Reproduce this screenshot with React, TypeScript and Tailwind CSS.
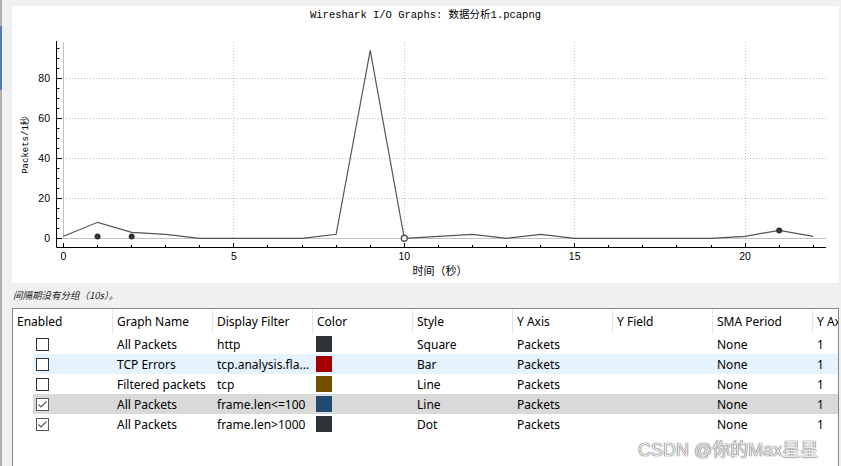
const X0 = 63.5;
const XS = 34.08;
const Y0 = 238.3;
const YS = 2;
const px = (v: number) => X0 + XS * v;
const py = (v: number) => Y0 - YS * v;
const crisp = (n: number) => Math.floor(n) + 0.5;

const series = [1, 8, 3, 2, 0, 0, 0, 0, 2, 94, 0, 1, 2, 0, 2, 0, 0, 0, 0, 0, 1, 4, 1];

const mono = "'Liberation Mono', 'Noto Sans CJK SC', monospace";
const tickFont = "'Liberation Sans', Arial, sans-serif";

const columns = ["Enabled", "Graph Name", "Display Filter", "Color", "Style", "Y Axis", "Y Field", "SMA Period", "Y Axis Factor"];

const graphs = [
  { on: false, name: "All Packets", filter: "http", color: "bg-[#2e3236]", style: "Square", bg: "bg-white" },
  { on: false, name: "TCP Errors", filter: "tcp.analysis.fla...", color: "bg-[#a40000]", style: "Bar", bg: "bg-[#e5f3ff]" },
  { on: false, name: "Filtered packets", filter: "tcp", color: "bg-[#725000]", style: "Line", bg: "bg-white" },
  { on: true, name: "All Packets", filter: "frame.len<=100", color: "bg-[#204a6e]", style: "Line", bg: "bg-[#d9d9d9]" },
  { on: true, name: "All Packets", filter: "frame.len>1000", color: "bg-[#2e3436]", style: "Dot", bg: "bg-white" },
];

function Chart() {
  const linePts = series.map((v, i) => `${px(i)},${py(v)}`).join(" ");
  const minorY = Array.from({ length: 20 }, (_, i) => i * 5);
  const minorX = Array.from({ length: 23 }, (_, i) => i);
  return (
    <svg className="block shrink-0" width={827} height={258} viewBox="12 25 827 258">
      {/* grid */}
      {[20, 40, 60, 80].map((v) => (
        <line key={v} x1={63} x2={826} y1={crisp(py(v))} y2={crisp(py(v))} stroke="#c4c4c4" strokeDasharray="1 2" />
      ))}
      {[5, 10, 15, 20].map((v) => (
        <line key={v} x1={crisp(px(v))} x2={crisp(px(v))} y1={42} y2={247} stroke="#c4c4c4" strokeDasharray="1 2" />
      ))}
      {/* zero lines */}
      <line x1={63} x2={826} y1={238.5} y2={238.5} stroke="#c0c0c0" />
      <line x1={63.5} x2={63.5} y1={42} y2={238} stroke="#c0c0c0" />

      {/* axes */}
      <line x1={56.5} x2={56.5} y1={41} y2={247.5} stroke="#000" />
      <line x1={56.5} x2={826} y1={247.5} y2={247.5} stroke="#000" />
      {minorY.map((v) => (
        <line key={v} x1={56.5} x2={v % 20 === 0 ? 62 : 59.5} y1={crisp(py(v))} y2={crisp(py(v))} stroke="#000" />
      ))}
      {minorX.map((v) => (
        <line key={v} x1={crisp(px(v))} x2={crisp(px(v))} y1={247} y2={v % 5 === 0 ? 243 : 245} stroke="#000" />
      ))}

      {/* tick labels */}
      {[0, 20, 40, 60, 80].map((v) => (
        <text key={v} x={50} y={py(v) + 3.8} textAnchor="end" fontSize={10.5} fontFamily={tickFont} fill="#000">
          {v}
        </text>
      ))}
      {[0, 5, 10, 15, 20].map((v) => (
        <text key={v} x={px(v)} y={260} textAnchor="middle" fontSize={10.5} fontFamily={tickFont} fill="#000">
          {v}
        </text>
      ))}

      {/* axis titles */}
      <text x={440} y={275} textAnchor="middle" fontSize={11} fontFamily="'Noto Sans CJK SC', sans-serif" fill="#000">
        时间（秒）
      </text>
      <text
        x={0}
        y={0}
        transform="translate(27.5 145) rotate(-90)"
        textAnchor="middle"
        fontSize={9}
        fontFamily={mono}
        fill="#000"
      >
        Packets/1秒
      </text>

      {/* data */}
      <polyline points={linePts} fill="none" stroke="#555" strokeWidth={1.2} />
      <circle cx={px(1)} cy={236.4} r={3} fill="#333" />
      <circle cx={px(2)} cy={236.4} r={3} fill="#333" />
      <circle cx={px(21)} cy={230.4} r={3} fill="#333" />
      <circle cx={px(10)} cy={238.3} r={3} fill="#fff" stroke="#555" strokeWidth={1.4} />
    </svg>
  );
}

function Checkbox({ on }: { on: boolean }) {
  return (
    <div className={`flex h-[13px] w-[13px] items-center justify-center border bg-white ${on ? "border-[#555]" : "border-[#333]"}`}>
      {on && (
        <svg width="11" height="11" viewBox="0 0 11 11" fill="none" stroke="#555" strokeWidth="1.2">
          <polyline points="1.5,5.5 4,8 9.5,2.5" />
        </svg>
      )}
    </div>
  );
}

export default function App() {
  return (
    <div className="relative flex h-[466px] w-[841px] overflow-hidden bg-[#f0f0f0] text-black">
      {/* window edge */}
      <div className="flex w-[2px] shrink-0 flex-col bg-[#b0b0b0]">
        <div className="h-[26px] shrink-0" />
        <div className="h-[64px] shrink-0 bg-[#4d7fc0]" />
      </div>

      <div className="ml-[10px] flex w-[827px] shrink-0 flex-col pt-[6px]">
        {/* Plot */}
        <div className="flex h-[277px] shrink-0 flex-col bg-white">
          <div className="h-[19px] shrink-0 text-center text-[10.5px] leading-[19px] font-['Liberation_Mono','Noto_Sans_CJK_SC',monospace]">
            Wireshark I/O Graphs: 数据分析1.pcapng
          </div>
          <Chart />
        </div>

        {/* Status */}
        <div className="flex h-[25px] shrink-0 items-center pl-[1px] text-[9.5px] italic text-[#202020] font-['Noto_Sans_CJK_SC',sans-serif]">
          间隔期没有分组（10s）。
        </div>

        {/* Graph table */}
        <div className="h-[200px] shrink-0 overflow-hidden border border-[#828790] bg-white text-[12px] font-['Noto_Sans',sans-serif]">
          <div className="flex h-[25px]">
            {columns.map((c) => (
              <div key={c} className="flex w-[100px] shrink-0 items-center overflow-hidden whitespace-nowrap border-r border-[#e5e5e5] pl-[4px]">
                {c}
              </div>
            ))}
          </div>
          {graphs.map((g, i) => (
            <div key={i} className="flex h-[20px]">
              <div className="w-[20px] shrink-0" />
              <div className={`flex flex-1 ${g.bg}`}>
                <div className="flex w-[80px] shrink-0 items-center pl-[3px]">
                  <Checkbox on={g.on} />
                </div>
                <div className="flex w-[100px] shrink-0 items-center whitespace-nowrap pl-[4px] pt-[2px]">{g.name}</div>
                <div className="flex w-[100px] shrink-0 items-center whitespace-nowrap pl-[4px] pt-[2px]">{g.filter}</div>
                <div className="flex w-[100px] shrink-0 items-center pl-[3px]">
                  <div className={`h-[16px] w-[16px] ${g.color}`} />
                </div>
                <div className="flex w-[100px] shrink-0 items-center pl-[4px] pt-[2px]">{g.style}</div>
                <div className="flex w-[100px] shrink-0 items-center pl-[4px] pt-[2px]">Packets</div>
                <div className="w-[100px] shrink-0" />
                <div className="flex w-[100px] shrink-0 items-center pl-[4px] pt-[2px]">None</div>
                <div className="flex w-[100px] shrink-0 items-center pl-[4px] pt-[2px]">1</div>
              </div>
            </div>
          ))}
        </div>
      </div>

      <div className="absolute left-[638px] top-[438px] text-[18px] leading-[24px] whitespace-nowrap text-[#e8e8e8] [text-shadow:0_0_1px_#555,0_0_1px_#555] font-['Liberation_Sans','Noto_Sans_CJK_SC',sans-serif]">
        CSDN @你的Max星星
      </div>
    </div>
  );
}
